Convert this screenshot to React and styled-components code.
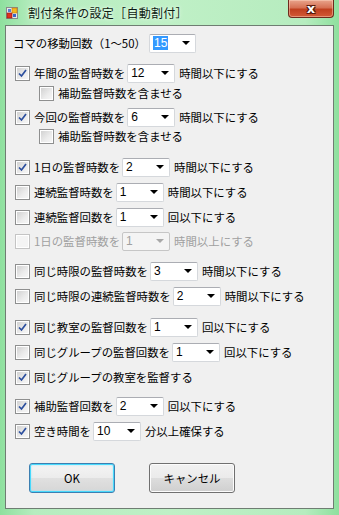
import React from 'react';
import styled, { createGlobalStyle } from 'styled-components';

const GlobalStyle = createGlobalStyle`
  html, body {
    margin: 0;
    padding: 0;
    background: #a9e6b3;
  }
  body {
    font-family: "Noto Sans CJK JP", "Liberation Sans", sans-serif;
  }
`;

const Window = styled.div`
  width: 339px;
  height: 515px;
  box-sizing: border-box;
  display: flex;
  flex-direction: column;
  padding: 0 5px 6px 5px;
  background: linear-gradient(90deg, #8ee09e 0%, #b6ecbf 10%, #bff0c6 50%, #b6ecbf 90%, #8ee09e 100%);
`;

const TitleBar = styled.div`
  height: 25px;
  display: flex;
  align-items: center;
  position: relative;
  flex-shrink: 0;
`;

const TitleIcon = styled.svg`
  width: 12px;
  height: 12px;
  margin: 0 10px 0 1px;
`;

const TitleText = styled.div`
  font-size: 12px;
  color: #0c1a10;
  text-shadow: 0 0 4px #eaffee, 0 0 2px #eaffee;
  letter-spacing: 0.3px;
`;

const CloseButton = styled.div`
  position: absolute;
  top: 0;
  right: 0;
  width: 44px;
  height: 17px;
  border: 1px solid #6e2a1c;
  border-top: none;
  border-radius: 0 0 4px 4px;
  background: linear-gradient(180deg, #e9a48c 0%, #d67154 45%, #c0401f 55%, #d35a36 100%);
  box-shadow: inset 0 0 0 1px rgba(255, 220, 200, 0.45);
  display: flex;
  align-items: center;
  justify-content: center;
  color: #fff;
  font-family: "DejaVu Sans", sans-serif;
  font-weight: bold;
  font-size: 13px;
  line-height: 1;
  text-shadow: 0 0 1px #3a1008, 1px 1px 0 #5a1a0c, -1px -1px 0 #5a1a0c, 1px -1px 0 #5a1a0c, -1px 1px 0 #5a1a0c;
`;

const Client = styled.div`
  flex: 1;
  background: #f0f0f0;
  border: 1px solid #6f7d72;
  padding: 0 0 0 9px;
  font-size: 11.4px;
  color: #000;
`;

const Row = styled.div`
  height: 20px;
  display: flex;
  align-items: center;
  margin-top: ${p => p.$top}px;
  padding-left: ${p => p.$indent || 0}px;
`;

const Label = styled.span`
  color: ${p => (p.$disabled ? '#a0a0a0' : '#000')};
  white-space: nowrap;
  margin-left: ${p => p.$ml || 0}px;
  ${p => p.$w && `width: ${p.$w}px;`}
`;

const Box = styled.span`
  width: 11px;
  height: 11px;
  border: 1px solid ${p => (p.$disabled ? '#c4c4c4' : '#8e8f8f')};
  background: #fff;
  padding: 1px;
  box-sizing: content-box;
  display: inline-flex;
  margin-right: 4px;
  flex-shrink: 0;
`;

const BoxInner = styled.span`
  flex: 1;
  background: ${p => (p.$disabled ? '#f4f4f4' : 'linear-gradient(135deg, #d2d2d2 0%, #ececec 60%, #f6f6f6 100%)')};
  display: flex;
  align-items: center;
  justify-content: center;
`;

const Select = styled.span`
  width: ${p => p.$w || 48}px;
  height: 19px;
  box-sizing: border-box;
  border: 1px solid ${p => (p.$disabled ? '#c6c6c6' : '#d5d8dc')};
  border-top-color: ${p => (p.$disabled ? '#c6c6c6' : '#abadb3')};
  border-radius: 2px;
  background: ${p => (p.$disabled ? '#f4f4f4' : '#fff')};
  display: flex;
  align-items: center;
  margin: 0 4px 0 2px;
  padding-left: 3px;
  flex-shrink: 0;
`;

const SelectValue = styled.span`
  flex: 1;
  font-family: "Liberation Sans", sans-serif;
  font-size: 12px;
  color: ${p => (p.$disabled ? '#a0a0a0' : '#000')};
  line-height: 15px;
`;

const Highlight = styled.span`
  background: #3399ff;
  color: #fff;
  padding: 0 1px;
`;

const Arrow = styled.span`
  width: 0;
  height: 0;
  border-left: 4px solid transparent;
  border-right: 4px solid transparent;
  border-top: 4px solid ${p => (p.$disabled ? '#a8a8a8' : '#000')};
  margin-right: 5px;
`;

const ButtonRow = styled.div`
  display: flex;
  gap: 34px;
  margin-top: 22px;
  padding-left: 14px;
`;

const Button = styled.div`
  width: 86px;
  height: 30px;
  box-sizing: border-box;
  border: 1px solid #707070;
  border-radius: 3px;
  background: linear-gradient(180deg, #f2f2f2 0%, #ebebeb 50%, #dddddd 51%, #cfcfcf 100%);
  box-shadow: inset 0 0 0 1px #fcfcfc;
  display: flex;
  align-items: center;
  justify-content: center;
  font-size: 11.4px;
  color: #000;
  ${p => p.$focused && `
    border-color: #3c7fb1;
    background: linear-gradient(180deg, #f4f4f4 0%, #ececec 50%, #e0e0e0 51%, #d6d6d6 100%);
    box-shadow: inset 0 0 0 1px #48d9fc, inset 0 0 2px 1px #9ee3fb;
  `}
`;

const Check = () => (
  <svg width="9" height="9" viewBox="0 0 9 9">
    <path d="M1 4.5 L3.5 7 L8 1" fill="none" stroke="#2c4f9e" strokeWidth="1.7" />
  </svg>
);

const CheckBox = ({ checked, disabled }) => (
  <Box $disabled={disabled}>
    <BoxInner $disabled={disabled}>{checked && <Check />}</BoxInner>
  </Box>
);

const Combo = ({ value, w, disabled, selected }) => (
  <Select $w={w} $disabled={disabled}>
    <SelectValue $disabled={disabled}>
      {selected ? <Highlight>{value}</Highlight> : value}
    </SelectValue>
    <Arrow $disabled={disabled} />
  </Select>
);

const rows = [
  { top: 10, checked: true, label: '年間の監督時数を', value: '12', after: '時間以下にする' },
  { top: 0, indent: 24, label: '補助監督時数を含ませる' },
  { top: 4, checked: true, label: '今回の監督時数を', value: '6', after: '時間以下にする' },
  { top: -1, indent: 24, label: '補助監督時数を含ませる' },
  { top: 11, checked: true, label: '1日の監督時数を', value: '2', after: '時間以下にする' },
  { top: 5, label: '連続監督時数を', value: '1', after: '時間以下にする' },
  { top: 5, label: '連続監督回数を', value: '1', after: '回以下にする' },
  { top: 4, disabled: true, label: '1日の監督時数を', value: '1', after: '時間以上にする' },
  { top: 10, label: '同じ時限の監督時数を', value: '3', after: '時間以下にする' },
  { top: 5, label: '同じ時限の連続監督時数を', value: '2', after: '時間以下にする' },
  { top: 11, checked: true, label: '同じ教室の監督回数を', value: '1', after: '回以下にする' },
  { top: 5, label: '同じグループの監督回数を', value: '1', after: '回以下にする' },
  { top: 5, checked: true, label: '同じグループの教室を監督する' },
  { top: 9, checked: true, label: '補助監督回数を', value: '2', after: '回以下にする' },
  { top: 5, checked: true, label: '空き時間を', value: '10', after: '分以上確保する' },
];

export default function App() {
  return (
    <>
      <GlobalStyle />
      <Window>
        <TitleBar>
          <TitleIcon viewBox="0 0 12 12">
            <rect x="0.5" y="0.5" width="11" height="11" fill="#e8e8e8" stroke="#8a8a8a" />
            <rect x="6" y="1" width="5" height="5" fill="#f5b820" stroke="#c07a10" strokeWidth="0.6" />
            <rect x="1" y="6" width="5" height="5" fill="#e23020" stroke="#901810" strokeWidth="0.6" />
            <rect x="2" y="2" width="3" height="3" fill="#5a7fd0" />
            <rect x="7" y="7" width="3" height="3" fill="#3a66c8" />
          </TitleIcon>
          <TitleText>割付条件の設定［自動割付］</TitleText>
          <CloseButton>x</CloseButton>
        </TitleBar>
        <Client>
          <Row $top={7}>
            <Label $ml={-2} $w={134}>コマの移動回数（1～50）</Label>
            <Combo value="15" w={47} selected />
          </Row>
          {rows.map((r, i) => (
            <Row key={i} $top={r.top} $indent={r.indent}>
              <CheckBox checked={r.checked} disabled={r.disabled} />
              <Label $disabled={r.disabled}>{r.label}</Label>
              {r.value && <Combo value={r.value} disabled={r.disabled} />}
              {r.after && <Label $disabled={r.disabled}>{r.after}</Label>}
            </Row>
          ))}
          <ButtonRow>
            <Button $focused>OK</Button>
            <Button>キャンセル</Button>
          </ButtonRow>
        </Client>
      </Window>
    </>
  );
}
